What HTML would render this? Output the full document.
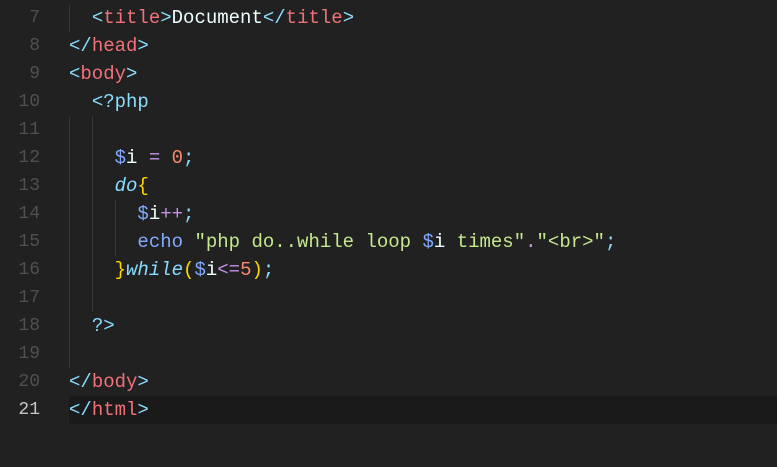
<!DOCTYPE html>
<html><head><style>
body{margin:0;width:777px;height:467px;background:#212121;overflow:hidden;position:relative;font-family:"Liberation Mono",monospace;font-size:19px}
.l{position:absolute;left:0;width:777px;height:28px;line-height:28px;white-space:pre}
.n{position:absolute;right:737px;color:#505050;font-size:18px}
.c{position:absolute;left:69px;color:#eeffff}
.t{color:#f07178}.b{color:#89ddff}.v{color:#82aaff}.w{color:#eeffff}.p{color:#c792ea}.o{color:#f78c6c}.s{color:#c3e88d}.y{color:#ffd700}.k{color:#89ddff;font-style:italic}.e{color:#82aaff}
.g{position:absolute;width:1px;background:#363636}
</style></head><body>
<div class="g" style="left:69px;top:4px;height:28px"></div>
<div class="g" style="left:69px;top:116px;height:252px"></div>
<div class="g" style="left:92px;top:116px;height:196px"></div>
<div class="g" style="left:115px;top:200px;height:56px"></div>
<div class="l" style="top:396px;left:69px;width:708px;background:#1a1a1a"></div>
<div class="l" style="top:4px"><span class="n">7</span><span class="c">  <span class="b">&lt;</span><span class="t">title</span><span class="b">&gt;</span>Document<span class="b">&lt;/</span><span class="t">title</span><span class="b">&gt;</span></span></div>
<div class="l" style="top:32px"><span class="n">8</span><span class="c"><span class="b">&lt;/</span><span class="t">head</span><span class="b">&gt;</span></span></div>
<div class="l" style="top:60px"><span class="n">9</span><span class="c"><span class="b">&lt;</span><span class="t">body</span><span class="b">&gt;</span></span></div>
<div class="l" style="top:88px"><span class="n">10</span><span class="c">  <span class="b">&lt;?php</span></span></div>
<div class="l" style="top:116px"><span class="n">11</span></div>
<div class="l" style="top:144px"><span class="n">12</span><span class="c">    <span class="v">$</span>i <span class="p">=</span> <span class="o">0</span><span class="b">;</span></span></div>
<div class="l" style="top:172px"><span class="n">13</span><span class="c">    <span class="k">do</span><span class="y">{</span></span></div>
<div class="l" style="top:200px"><span class="n">14</span><span class="c">      <span class="v">$</span>i<span class="p">++</span><span class="b">;</span></span></div>
<div class="l" style="top:228px"><span class="n">15</span><span class="c">      <span class="e">echo</span> <span class="s">"php do..while loop </span><span class="v">$</span>i<span class="s"> times"</span><span class="p">.</span><span class="s">"&lt;br&gt;"</span><span class="b">;</span></span></div>
<div class="l" style="top:256px"><span class="n">16</span><span class="c">    <span class="y">}</span><span class="k">while</span><span class="y">(</span><span class="v">$</span>i<span class="p">&lt;=</span><span class="o">5</span><span class="y">)</span><span class="b">;</span></span></div>
<div class="l" style="top:284px"><span class="n">17</span></div>
<div class="l" style="top:312px"><span class="n">18</span><span class="c">  <span class="b">?&gt;</span></span></div>
<div class="l" style="top:340px"><span class="n">19</span></div>
<div class="l" style="top:368px"><span class="n">20</span><span class="c"><span class="b">&lt;/</span><span class="t">body</span><span class="b">&gt;</span></span></div>
<div class="l" style="top:396px"><span class="n" style="color:#c6c6c6">21</span><span class="c"><span class="b">&lt;/</span><span class="t">html</span><span class="b">&gt;</span></span></div>
</body></html>
